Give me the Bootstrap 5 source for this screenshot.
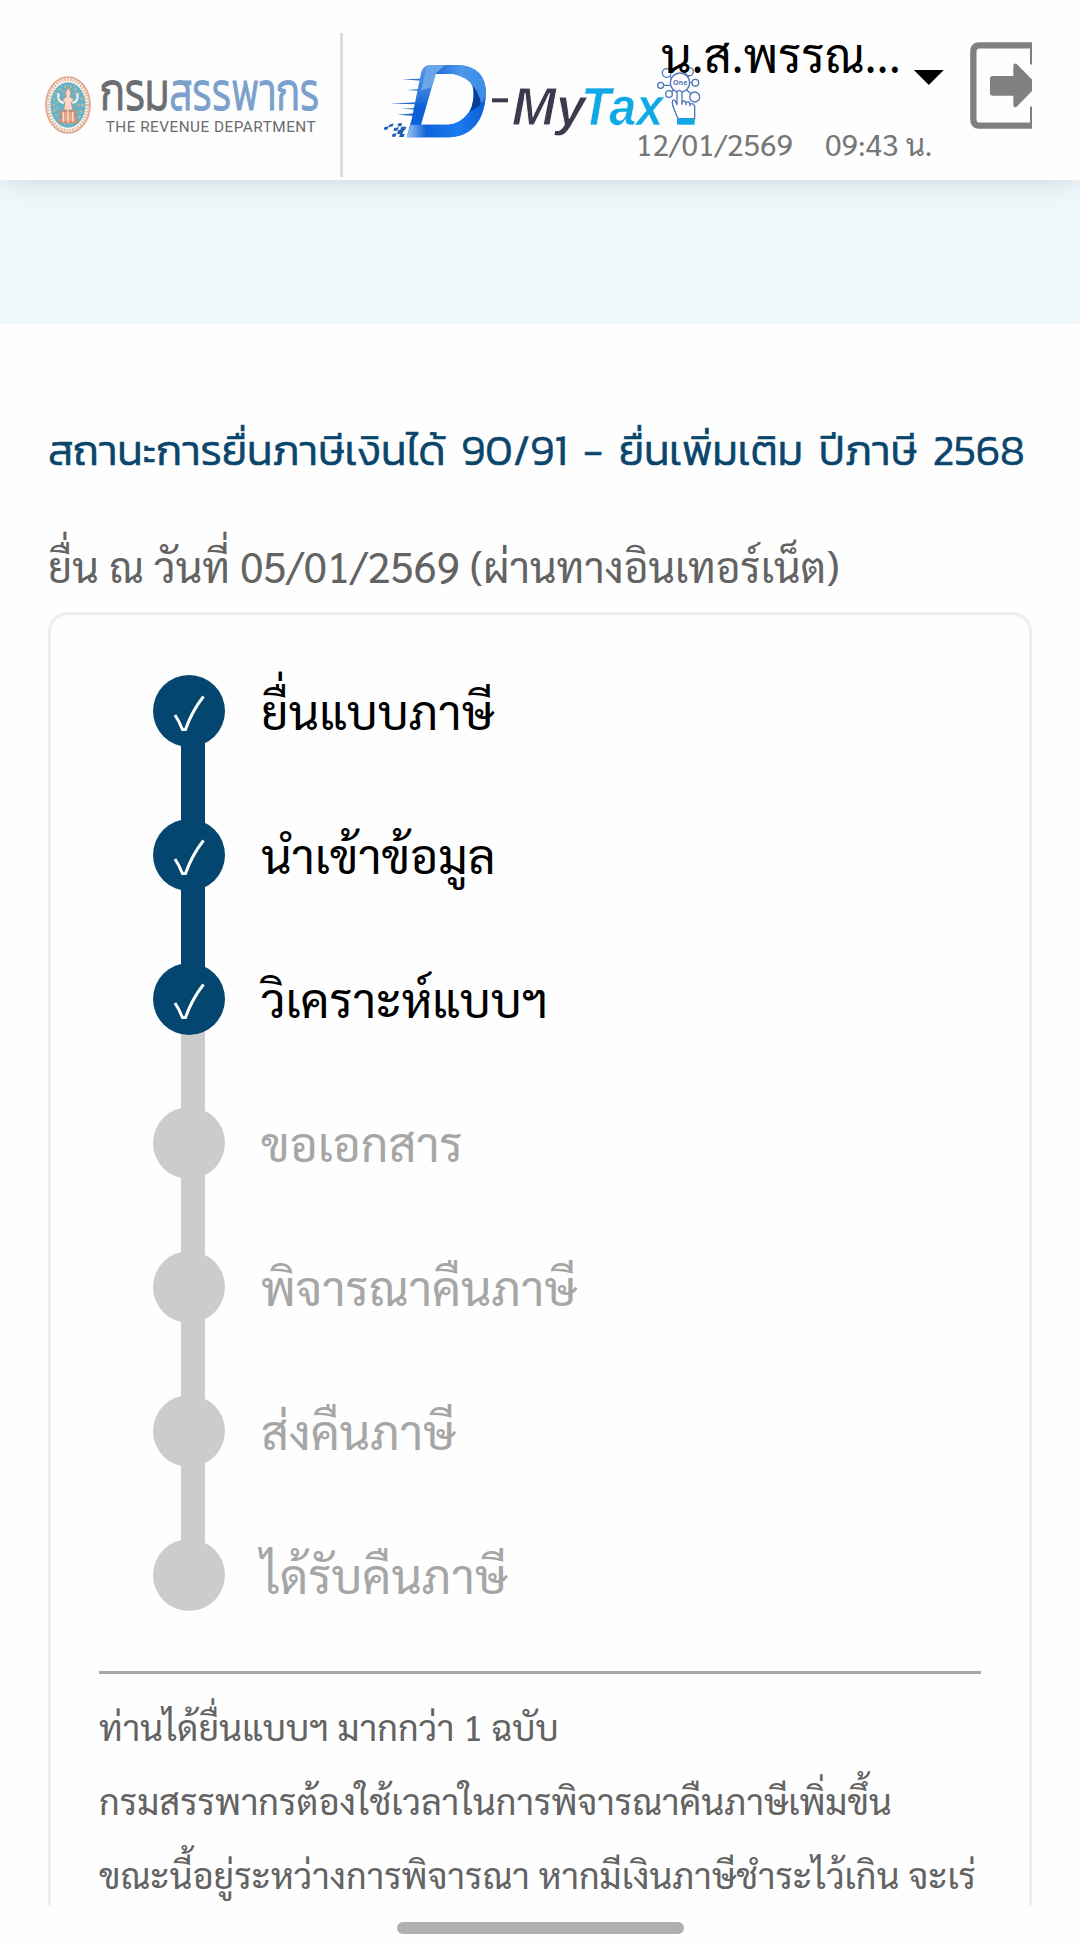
<!DOCTYPE html>
<html lang="th">
<head>
<meta charset="utf-8">
<meta name="viewport" content="width=device-width, initial-scale=1">
<title>D-MyTax</title>
<link href="https://cdn.jsdelivr.net/npm/bootstrap@5.3.0/dist/css/bootstrap.min.css" rel="stylesheet">
<style>
body{font-family:Sarabun,"Noto Sans Thai Looped","Noto Sans",sans-serif;color:#636363;background:#fefefe}
.screen{width:1080px;height:1950px}
.viewport-area{height:1905px}
.topbar{height:180px;background:#fefefe;box-shadow:0 9px 22px -6px rgba(60,80,95,.16)}
.rule-v{width:3px;height:144px;background:#ddd;margin-top:33px}
.brand-tax{margin-left:-3px}
.user-block{margin-left:-84px;width:313px;color:#000}
.user-row{height:86px}
.user-name{font-size:48px;line-height:60px;padding:23px 0 0 25px}
.caret{width:30px;height:15px;background:#000;clip-path:polygon(0 0,100% 0,50% 100%);margin:70px 0 0 13px}
.stamp{font-size:30px;line-height:40px;color:#777;margin-top:38px;gap:32px}
.exit-ico{margin:42px 0 0 21px}
.band{height:144px;background:#eef7fa}
.main-area{padding:96px 48px 0}
.ttl{font-family:Kanit,"Noto Sans Thai","Noto Sans",sans-serif;font-weight:300;font-size:42.300px;line-height:60px;word-spacing:6px;color:#0a466c;-webkit-text-stroke:.7px #0a466c}
.sub{font-size:42px;line-height:60px;margin-top:56px}
.panel{border:3px solid #ededed;border-radius:20px;height:1400px;margin-top:16px;padding:60px 48px 0}
.steps{padding-left:54px}
.step{height:144px}
.step .dot{width:72px;height:72px;background:#ccc;z-index:1}
.step .bar{width:24px;height:80px;background:#ccc;left:28px;top:68px}
.step.done .dot,.step.done .bar{background:#04466f}
.step.last-done .bar{background:#ccc}
.lbl{font-size:48px;line-height:70px;margin-left:36px;color:#a6a6a6}
.done .lbl{color:#000}
.hr-line{height:3px;background:#a6a6a6;margin-top:-12px}
.note{font-size:36px;line-height:74px;margin-top:15px}
.home-bar{width:287px;height:12px;background:#b0b0b0;margin-top:17px}
</style>
</head>
<body>
<div class="screen overflow-hidden">
<div class="viewport-area overflow-hidden">
<header class="topbar d-flex align-items-start position-relative text-nowrap">
  <svg class="flex-shrink-0" width="340" height="180" viewBox="0 0 1020 540">
    <ellipse cx="204" cy="315" rx="66" ry="84" fill="#fff7f1" stroke="#dda189" stroke-width="5"/>
    <ellipse cx="204" cy="315" rx="61" ry="78" fill="none" stroke="#e4b69f" stroke-width="12" stroke-dasharray="5 4"/>
    <ellipse cx="204" cy="315" rx="53" ry="68" fill="#67b3c8"/>
    <ellipse cx="204" cy="315" rx="43" ry="56" fill="none" stroke="#c3b78f" stroke-width="8" stroke-dasharray="6 11"/>
    <ellipse cx="204" cy="315" rx="32" ry="44" fill="none" stroke="#bcb48f" stroke-width="6" stroke-dasharray="5 13"/>
    <path d="M176 280q-7 24 16 29M231 280q7 24-14 29" fill="none" stroke="#eef8fa" stroke-width="6"/>
    <path d="M206 262l7 16-3 12 12 10-8 8 5 22h-28l4-22-8-8 12-10-3-12z" fill="#f6ddd0" stroke="#d88767" stroke-width="3"/>
    <path d="M180 335h48l-5 12 10 20h-55l8-20z" fill="#e5a286" stroke="#d88364" stroke-width="4"/>
    <path d="M190 335v32M204 328v40M218 335v32" stroke="#f7e3d8" stroke-width="4"/>
    <g font-family="Kanit,'Noto Sans Thai',sans-serif" font-weight="300" font-size="164" stroke-width="3">
      <text x="300" y="329" textLength="208" lengthAdjust="spacingAndGlyphs" fill="#6c6d71" stroke="#6c6d71">กรม</text>
      <text x="508" y="329" textLength="450" lengthAdjust="spacingAndGlyphs" fill="#7aa0cc" stroke="#7aa0cc">สรรพากร</text>
    </g>
    <text x="317" y="396" textLength="630" font-family="Roboto,Arial,sans-serif" font-size="46" fill="#6b6b6e">THE REVENUE DEPARTMENT</text>
  </svg>
  <div class="rule-v flex-shrink-0"></div>
  <svg class="brand-tax flex-shrink-0" width="380" height="180" viewBox="0 0 1140 540">
    <defs>
      <linearGradient id="g1" x1="0" y1="0" x2="0" y2="1"><stop offset="0" stop-color="#5a9ae6"/><stop offset=".4" stop-color="#2f7add"/><stop offset=".6" stop-color="#0a5fd6"/><stop offset="1" stop-color="#0b62da"/></linearGradient>
      <linearGradient id="g2" x1="0" y1="0" x2="1" y2="0"><stop offset="0" stop-color="#1f6cd4"/><stop offset=".5" stop-color="#4d97ea"/><stop offset="1" stop-color="#3b8be6"/></linearGradient>
      <linearGradient id="g3" x1="0" y1="0" x2="1" y2="0"><stop offset="0" stop-color="#9cc4f2"/><stop offset=".25" stop-color="#0c63d8"/><stop offset=".65" stop-color="#1a7cf0"/><stop offset="1" stop-color="#0b5fd2"/></linearGradient>
    </defs>
    <path d="M186 238l58-2v6zM200 270l45-3v6zM150 311l90-5v7zM186 326l50-3v6zM172 344l50-4v8z" fill="#2a6fc9"/>
    <path fill-rule="evenodd" d="M268 195H355Q438 200 438 282Q430 405 330 412H200L215 358L243 220Q248 197 268 195ZM287 222L243 374H325Q392 365 402 290Q402 226 340 222Z" fill="url(#g1)"/>
    <path d="M243 272L256 215Q260 195 275 195H315L287 222L274 262Z" fill="#69a5e9"/>
    <path d="M315 195H355Q440 200 438 285L428 330Q418 240 340 222H287Z" fill="url(#g2)"/>
    <path d="M399 258Q425 290 426 345L388 340Q405 300 399 258Z" fill="#073f94"/>
    <path d="M437 290Q425 405 330 412H200L212 374H325Q362 372 388 335Q424 320 437 290Z" fill="url(#g3)"/>
    <path d="M148 374l13-4-3 9-12 3zM175 370h12l-4 9h-11zM133 382l13-3-4 10h-11zM163 384l14-2-5 10h-12zM184 380h15l-4 11h-15zM175 390h17l-5 12h-16zM158 402l12-2-4 10h-11zM180 402h14l-3 9h-14z" fill="#1b5fb8"/>
    <rect x="456" y="295" width="48" height="12" fill="#3a3d50"/>
    <g font-family="Liberation Sans,Arial,sans-serif" font-weight="700" font-style="italic">
      <text x="515" y="374" font-size="162" textLength="222" lengthAdjust="spacingAndGlyphs" fill="#3a3b4d" stroke="#fefefe" stroke-width="3">My</text>
      <text x="724" y="374" font-size="162" textLength="246" lengthAdjust="spacingAndGlyphs" fill="#10a9e6" stroke="#fefefe" stroke-width="2">Tax</text>
    </g>
    <g fill="#fefefe" stroke="#4e76b8" stroke-width="4">
      <path d="M990 230l15 10M1050 225l-12 10M972 256h25M1045 248h12M995 275l8-8M1040 270l16 14" fill="none"/>
      <circle cx="980" cy="219" r="13"/><circle cx="1048" cy="215" r="12"/><circle cx="962" cy="256" r="9"/><circle cx="1066" cy="248" r="10"/><circle cx="987" cy="282" r="10"/><circle cx="1064" cy="291" r="15"/>
      <circle cx="1020" cy="248" r="29"/>
      <path d="M1014 356l-14-34q-6-18 0-22 5-2 11 14v-38q7-10 15 0v30q8-7 12 2 9-6 12 4 9-4 14 6v38h-50z"/>
      <path d="M1026 306v8M1038 308v8M1050 311v8" fill="none"/>
    </g>
    <text x="999" y="255" font-family="Liberation Sans,Arial,sans-serif" font-weight="700" font-size="21" textLength="43" fill="#4468ae">One</text>
    <path d="M1011 355h53v19h-53z" fill="#10a9e6"/>
  </svg>
  <div class="user-block flex-shrink-0 position-relative">
    <div class="user-row d-flex align-items-start">
      <div class="user-name">น.ส.พรรณ...</div><div class="caret flex-shrink-0"></div>
    </div>
    <div class="stamp d-flex"><span>12/01/2569</span><span>09:43 น.</span></div>
  </div>
  <svg class="exit-ico flex-shrink-0" width="62" height="88" viewBox="0 0 186 264">
    <path d="M186 10H28Q10 10 10 30V232Q10 251 28 251H186" fill="none" stroke="#808080" stroke-width="19"/>
    <path d="M180 8V66l6 3V8zM180 195V255h6V192z" fill="#808080"/>
    <path d="M68 102h62V74q0-14 10-8l56 57v14l-56 57q-10 6-10-8V161H68q-8 0-8-8V110q0-8 8-8z" fill="#808080"/>
  </svg>
</header>
<div class="band"></div>
<main class="main-area text-nowrap">
  <h1 class="ttl mb-0">สถานะการยื่นภาษีเงินได้ 90/91 - ยื่นเพิ่มเติม ปีภาษี 2568</h1>
  <div class="sub">ยื่น ณ วันที่ 05/01/2569 (ผ่านทางอินเทอร์เน็ต)</div>
  <section class="panel">
    <div class="steps">
      <div class="step done d-flex position-relative"><i class="bar position-absolute"></i><div class="dot rounded-circle position-relative"><svg class="d-block" width="72" height="72" viewBox="0 0 72 72"><path d="M22 40q4 6 7.500 14.500h3Q39 36 50.500 21.500" fill="none" stroke="#fff" stroke-width="3"/></svg></div><div class="lbl">ยื่นแบบภาษี</div></div>
      <div class="step done d-flex position-relative"><i class="bar position-absolute"></i><div class="dot rounded-circle position-relative"><svg class="d-block" width="72" height="72" viewBox="0 0 72 72"><path d="M22 40q4 6 7.500 14.500h3Q39 36 50.500 21.500" fill="none" stroke="#fff" stroke-width="3"/></svg></div><div class="lbl">นำเข้าข้อมูล</div></div>
      <div class="step done last-done d-flex position-relative"><i class="bar position-absolute"></i><div class="dot rounded-circle position-relative"><svg class="d-block" width="72" height="72" viewBox="0 0 72 72"><path d="M22 40q4 6 7.500 14.500h3Q39 36 50.500 21.500" fill="none" stroke="#fff" stroke-width="3"/></svg></div><div class="lbl">วิเคราะห์แบบฯ</div></div>
      <div class="step d-flex position-relative"><i class="bar position-absolute"></i><div class="dot rounded-circle"></div><div class="lbl">ขอเอกสาร</div></div>
      <div class="step d-flex position-relative"><i class="bar position-absolute"></i><div class="dot rounded-circle"></div><div class="lbl">พิจารณาคืนภาษี</div></div>
      <div class="step d-flex position-relative"><i class="bar position-absolute"></i><div class="dot rounded-circle"></div><div class="lbl">ส่งคืนภาษี</div></div>
      <div class="step d-flex position-relative"><div class="dot rounded-circle"></div><div class="lbl">ได้รับคืนภาษี</div></div>
    </div>
    <div class="hr-line"></div>
    <div class="note">ท่านได้ยื่นแบบฯ มากกว่า 1 ฉบับ<br>กรมสรรพากรต้องใช้เวลาในการพิจารณาคืนภาษีเพิ่มขึ้น<br>ขณะนี้อยู่ระหว่างการพิจารณา หากมีเงินภาษีชำระไว้เกิน จะเร่</div>
  </section>
</main>
</div>
<div class="home-bar rounded-pill mx-auto"></div>
</div>
<script src="https://cdn.jsdelivr.net/npm/bootstrap@5.3.0/dist/js/bootstrap.bundle.min.js"></script>
</body>
</html>
